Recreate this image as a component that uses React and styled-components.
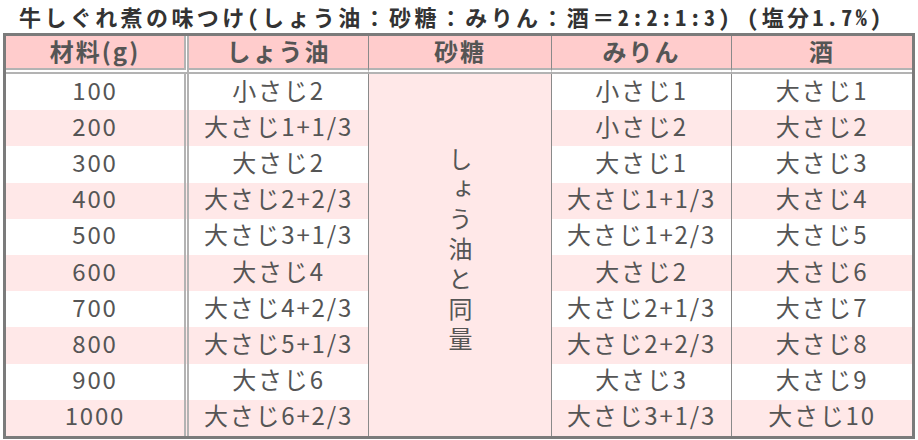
import React from "react";
import styled, { createGlobalStyle } from "styled-components";

const GlobalStyle = createGlobalStyle`
  html, body {
    margin: 0;
    padding: 0;
    background: #ffffff;
  }
  body {
    font-family: "Noto Sans CJK JP", "Noto Sans", sans-serif;
    color: #555555;
  }
`;

const rows = [
  ["100", "小さじ2", "小さじ1", "大さじ1"],
  ["200", "大さじ1+1/3", "小さじ2", "大さじ2"],
  ["300", "大さじ2", "大さじ1", "大さじ3"],
  ["400", "大さじ2+2/3", "大さじ1+1/3", "大さじ4"],
  ["500", "大さじ3+1/3", "大さじ1+2/3", "大さじ5"],
  ["600", "大さじ4", "大さじ2", "大さじ6"],
  ["700", "大さじ4+2/3", "大さじ2+1/3", "大さじ7"],
  ["800", "大さじ5+1/3", "大さじ2+2/3", "大さじ8"],
  ["900", "大さじ6", "大さじ3", "大さじ9"],
  ["1000", "大さじ6+2/3", "大さじ3+1/3", "大さじ10"],
];

const headers = [
  { label: "材料(g)", width: 183 },
  { label: "しょう油", width: 180 },
  { label: "砂糖", width: 183 },
  { label: "みりん", width: 180 },
  { label: "酒", width: 180 },
];

export default function App() {
  return (
    <>
      <GlobalStyle />
      <Page>
        <Title>
          牛しぐれ煮の味つけ(しょう油<Wide>：</Wide>砂糖<Wide>：</Wide>みりん
          <Wide>：</Wide>酒<Wide>＝</Wide>2:2:1:3) (塩分1.7%)
        </Title>
        <Table>
          <thead>
            <tr>
              {headers.map((h, i) => (
                <Th key={h.label} $width={h.width} $first={i === 0} $line={i > 0 && i < 4}>
                  {h.label}
                </Th>
              ))}
            </tr>
          </thead>
          <tbody>
            {rows.map((r, i) => (
              <Row key={r[0]} $shade={i % 2 === 1}>
                <Td $first>{r[0]}</Td>
                <Td $line>{r[1]}</Td>
                {i === 0 && (
                  <Merged rowSpan={rows.length}>
                    <Vertical>しょう油と同量</Vertical>
                  </Merged>
                )}
                <Td $line>{r[2]}</Td>
                <Td>{r[3]}</Td>
              </Row>
            ))}
          </tbody>
        </Table>
      </Page>
    </>
  );
}

const Page = styled.div`
  width: 918px;
  height: 440px;
  overflow: hidden;
`;

const Title = styled.h1`
  margin: 0;
  padding-left: 19px;
  height: 33px;
  font-size: 22px;
  line-height: 33px;
  font-weight: 700;
  letter-spacing: 3.4px;
  font-feature-settings: "hwid";
  color: #333333;
  white-space: nowrap;
`;

const Wide = styled.span`
  font-feature-settings: normal;
`;

const Table = styled.table`
  box-sizing: border-box;
  margin-left: 3px;
  width: 912px;
  table-layout: fixed;
  border-collapse: separate;
  border-spacing: 0;
  border: 3px solid #7b7b7b;
  background: #ffffff;
`;

const Th = styled.th`
  box-sizing: border-box;
  width: ${(p) => p.$width}px;
  height: 38px;
  padding: 0 0 2px;
  background: #ffcccc;
  background-clip: padding-box;
  border-bottom: 6px double #b3b3b3;
  border-right: ${(p) =>
    p.$first ? "5px double #b3b3b3" : p.$line ? "1px solid #8a8a8a" : "none"};
  font-size: 24px;
  line-height: 28px;
  font-weight: 700;
  letter-spacing: 2px;
  color: #555555;
  text-align: center;
  vertical-align: middle;
`;

const Row = styled.tr`
  background: ${(p) => (p.$shade ? "#ffe8e8" : "#ffffff")};
`;

const Td = styled.td`
  box-sizing: border-box;
  height: 36.2px;
  padding: 0 0 5px;
  border-right: ${(p) =>
    p.$first ? "5px double #b3b3b3" : p.$line ? "1px solid #8a8a8a" : "none"};
  font-size: 24px;
  line-height: 28px;
  letter-spacing: 1.8px;
  color: #555555;
  text-align: center;
  vertical-align: middle;
  white-space: nowrap;
`;

const Merged = styled.td`
  padding: 0;
  background: #ffe8e8;
  border-right: 1px solid #8a8a8a;
  text-align: center;
  vertical-align: middle;
`;

const Vertical = styled.span`
  display: inline-block;
  writing-mode: vertical-rl;
  font-size: 24px;
  line-height: 30px;
  letter-spacing: 6px;
  color: #555555;
`;
